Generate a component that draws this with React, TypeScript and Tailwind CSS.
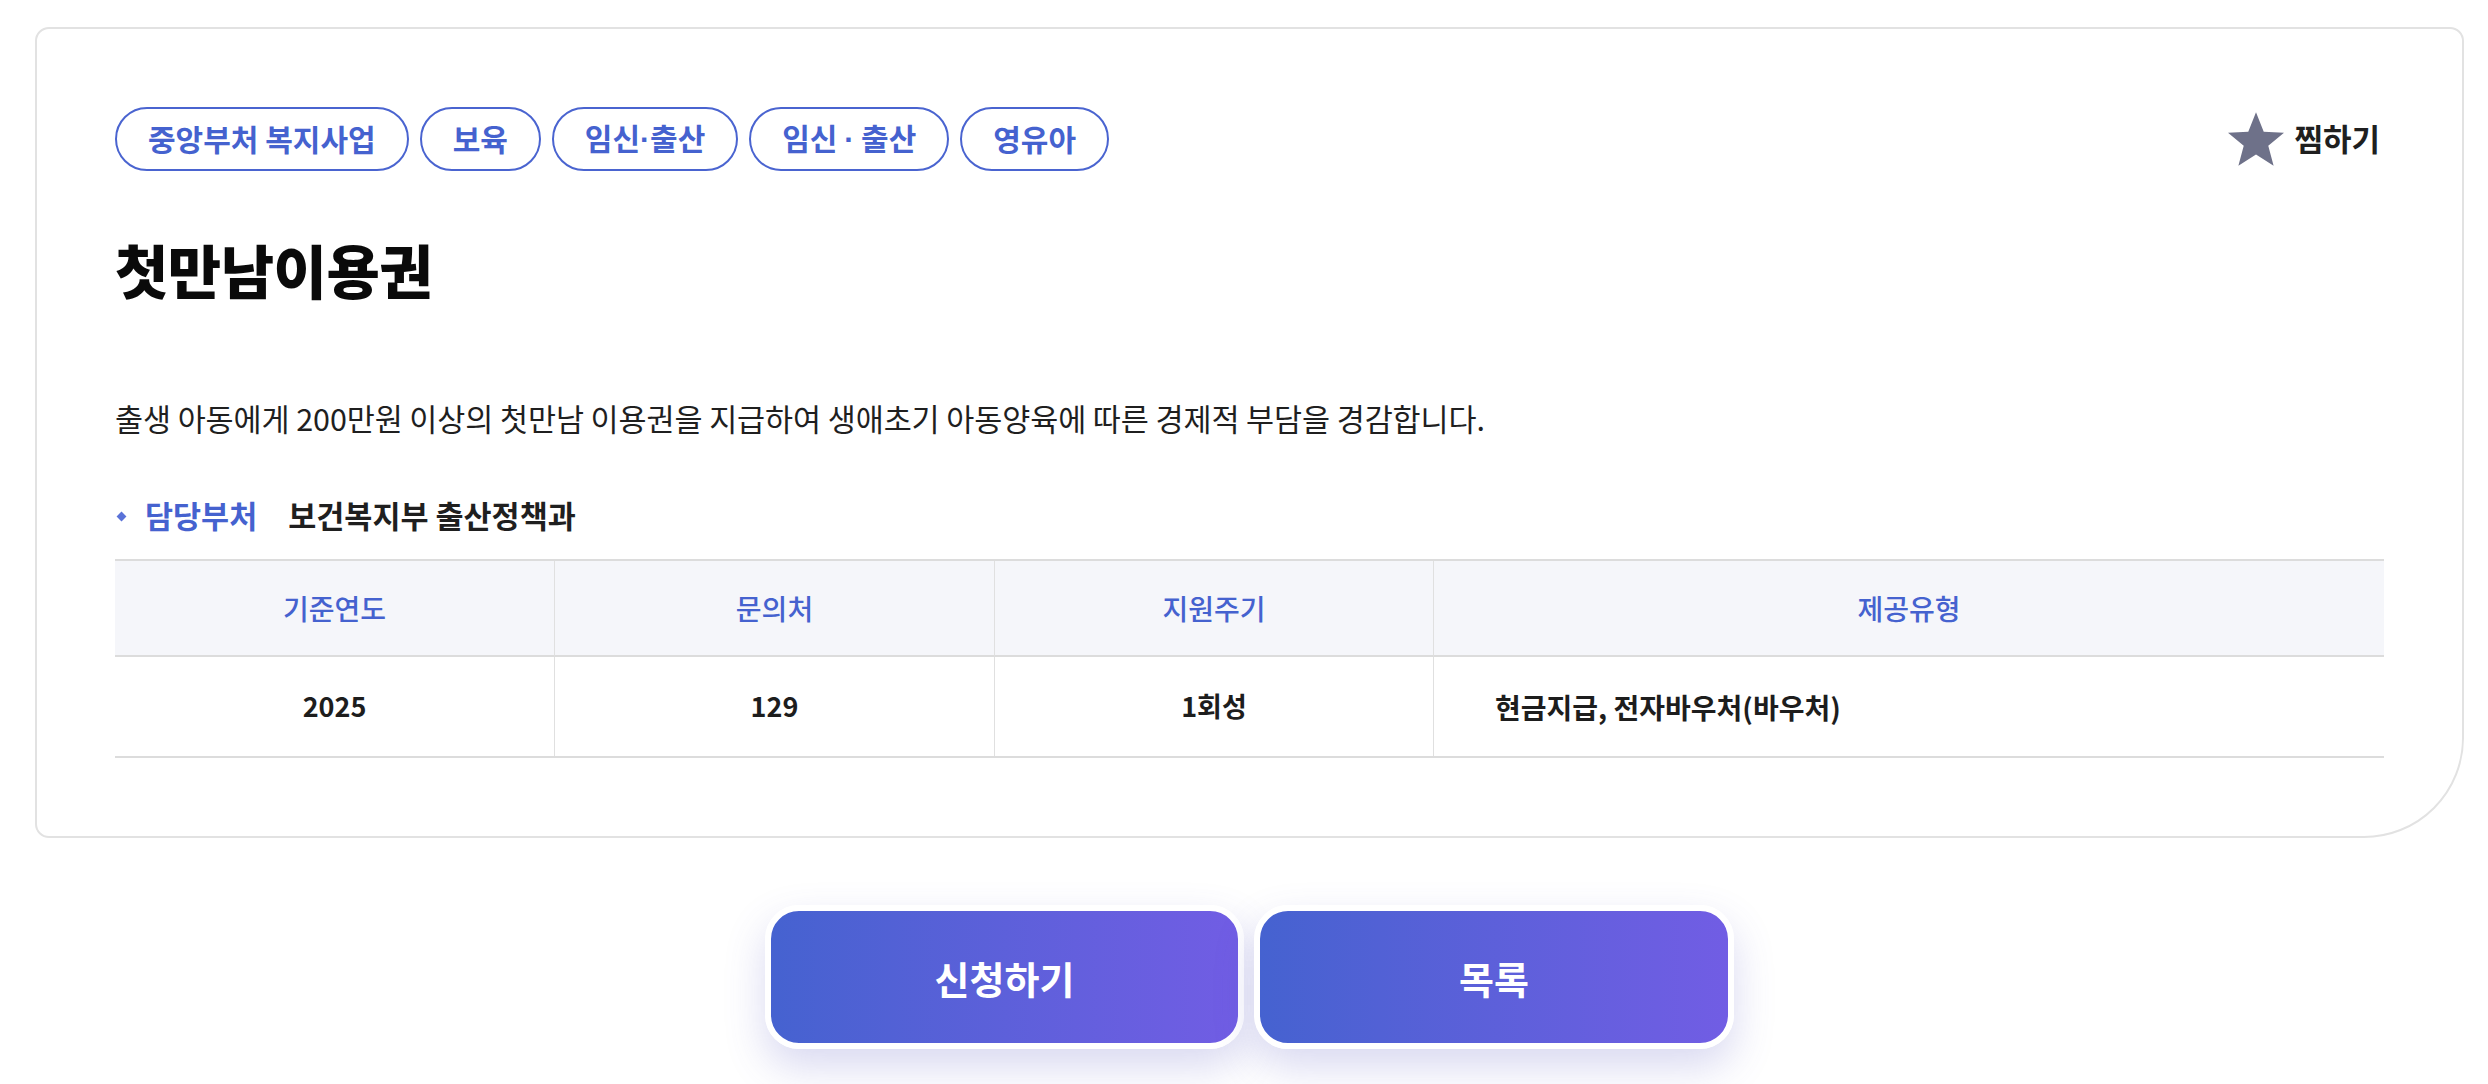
import React from "react";

const tags = ["중앙부처 복지사업", "보육", "임신·출산", "임신 · 출산", "영유아"];

const columns = [
    { head: "기준연도", value: "2025", align: "center" },
    { head: "문의처", value: "129", align: "center" },
    { head: "지원주기", value: "1회성", align: "center" },
    { head: "제공유형", value: "현금지급, 전자바우처(바우처)", align: "left" },
];

// the CJK font's middle dot is wider than the reference; use a narrow latin one
function TagText({ text }: { text: string }) {
    if (!text.includes("·")) return <span>{text}</span>;
    const [a, b] = text.split("·");
    return (
        <span>
            {a}
            <span className="font-['Liberation_Sans',sans-serif] font-bold">·</span>
            {b}
        </span>
    );
}

function StarIcon() {
    return (
        <svg width="56" height="54" viewBox="1.5 0.8 21 20.1" className="shrink-0">
            <path
                d="M12 0.8l2.9 7.3 7.6.4-5.9 4.9 2 7.5L12 16.7l-6.6 4.2 2-7.5L1.5 8.5l7.6-.4z"
                fill="#6e7189"
            />
        </svg>
    );
}

export default function App() {
    return (
        <div className="min-h-[1084px] w-[2488px] bg-white font-['Noto_Sans_CJK_KR',sans-serif] pt-[27px]">
            {/* Detail card */}
            <div className="ml-[35px] w-[2429px] rounded-tl-[14px] rounded-tr-[14px] rounded-bl-[14px] rounded-br-[100px] border-2 border-[#e2e2e2] bg-white p-[78px]">
                {/* Tags + bookmark */}
                <div className="flex h-[63px] items-center justify-between">
                    <div className="flex gap-[11px]">
                        {tags.map((t) => (
                            <span
                                key={t}
                                className="flex h-[64px] items-center whitespace-pre rounded-full border-2 border-[#4a64d0] px-[31px] text-[30px] font-semibold text-[#4562cf]"
                            >
                                <TagText text={t} />
                            </span>
                        ))}
                    </div>
                    <button className="mr-[4px] flex items-center gap-[10px]">
                        <StarIcon />
                        <span className="text-[31px] font-bold text-[#1f1f1f]">찜하기</span>
                    </button>
                </div>

                {/* Title */}
                <h1 className="mt-[68px] text-[58px] font-black leading-[62px] tracking-[-0.5px] text-[#0a0a0a]">
                    첫만남이용권
                </h1>

                {/* Description */}
                <p className="mt-[98px] text-[30.5px] leading-[40px] tracking-[-0.1px] text-[#1f1f1f]">
                    출생 아동에게 200만원 이상의 첫만남 이용권을 지급하여 생애초기 아동양육에 따른 경제적 부담을 경감합니다.
                </p>

                {/* Department */}
                <div className="mt-[58px] flex h-[40px] items-center">
                    <span className="ml-[3px] h-[7px] w-[7px] rotate-45 bg-[#5a72d8]" />
                    <span className="ml-[20px] text-[30.5px] font-bold text-[#4562cf]">담당부처</span>
                    <span className="ml-[31px] text-[30.5px] font-semibold text-[#1f1f1f]">보건복지부 출산정책과</span>
                </div>

                {/* Info table */}
                <div className="mt-[23px] grid grid-cols-[439px_440px_439px_1fr] border-y-2 border-[#dcdcdc]">
                    {columns.map((c, i) => (
                        <div
                            key={c.head}
                            className={`flex h-[96px] items-center justify-center border-b-2 border-[#dcdcdc] bg-[#f5f6fa] text-[28px] font-medium text-[#4562cf] ${i > 0 ? "border-l border-l-[#e0e0e0]" : ""}`}
                        >
                            {c.head}
                        </div>
                    ))}
                    {columns.map((c, i) => (
                        <div
                            key={c.value}
                            className={`flex h-[99px] items-center font-semibold text-[#1d1d1d] ${c.align === "center" ? "justify-center text-[27px]" : "justify-start pl-[61px] text-[28px]"} ${i > 0 ? "border-l border-[#e0e0e0]" : ""}`}
                        >
                            {c.value}
                        </div>
                    ))}
                </div>
            </div>

            {/* Action buttons */}
            <div className="ml-[35px] mt-[67px] flex w-[2429px] justify-center gap-[10px]">
                <button className="flex h-[144px] w-[479px] items-center justify-center rounded-[34px] border-[6px] border-white bg-gradient-to-r from-[#4562d0] to-[#715de4] text-[38px] font-bold text-white shadow-[0_18px_40px_rgba(80,80,190,0.22)]">
                    신청하기
                </button>
                <button className="flex h-[144px] w-[480px] items-center justify-center rounded-[34px] border-[6px] border-white bg-gradient-to-r from-[#4562d0] to-[#715de4] text-[38px] font-bold text-white shadow-[0_18px_40px_rgba(80,80,190,0.22)]">
                    목록
                </button>
            </div>
        </div>
    );
}
